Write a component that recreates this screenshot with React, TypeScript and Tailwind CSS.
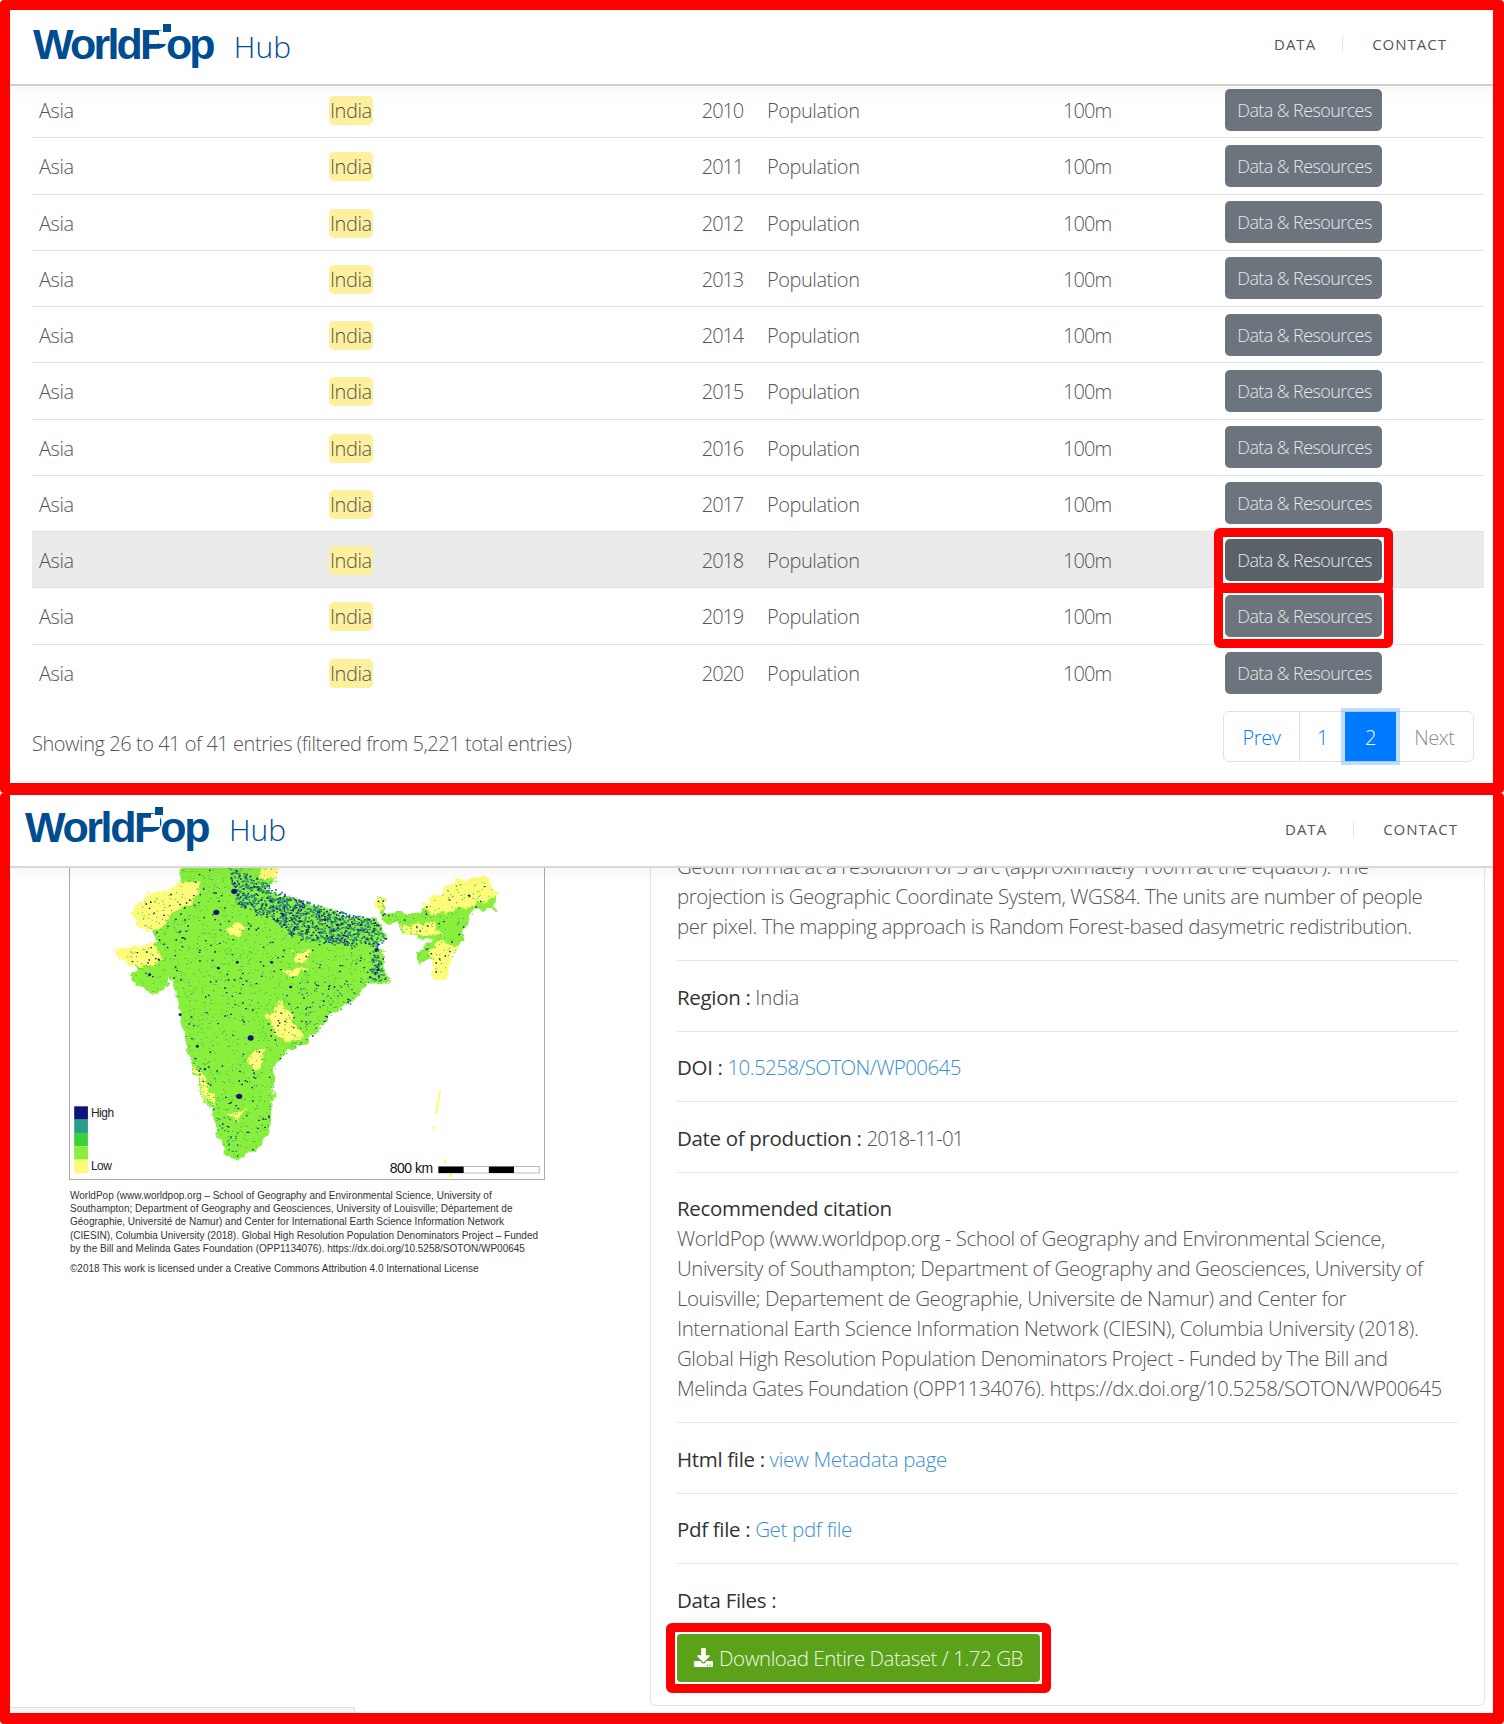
import { FaDownload } from 'react-icons/fa';

// seeded random so the map speckle stays the same between runs
function makeRandom(seed: number) {
  let s = seed;
  return () => {
    s = (s * 1664525 + 1013904223) % 4294967296;
    return s / 4294967296;
  };
}

type Pt = [number, number];

// map shapes are traced in crop coordinates, see the scale() on the group
const mainland: Pt[] = [[480,230],[740,230],[720,300],[700,335],[760,350],[800,375],[860,385],[900,410],[985,420],[1000,450],[1012,468],[985,490],[1000,510],[1018,605],[960,610],[945,630],[920,670],[870,700],[840,740],[800,790],[760,810],[720,850],[715,940],[703,1050],[680,1100],[650,1120],[620,1145],[590,1120],[560,1030],[530,940],[500,850],[470,720],[455,620],[445,590],[440,620],[400,645],[350,610],[335,590],[360,570],[340,540],[305,520],[400,495],[412,480],[390,445],[370,440],[350,400],[380,355],[430,345],[470,310]];
const northEast: Pt[] = [[985,355],[1010,355],[1010,400],[1100,400],[1130,360],[1200,310],[1260,300],[1300,345],[1295,390],[1240,390],[1200,500],[1160,590],[1140,590],[1130,530],[1100,553],[1090,520],[1130,480],[1050,460],[1040,430],[1020,430],[990,400]];
const yellowAreas: Pt[][] = [
  [[340,400],[380,345],[430,335],[470,310],[530,305],[510,370],[450,395],[420,450],[370,450]],
  [[295,515],[405,490],[425,545],[370,565],[330,550]],
  [[690,240],[750,240],[715,305],[680,290]],
  [[1100,380],[1200,300],[1270,290],[1310,345],[1240,375],[1170,400],[1130,410]],
  [[1045,435],[1140,428],[1155,470],[1060,462]],
  [[1150,480],[1200,500],[1165,600],[1135,600],[1125,530]],
  [[700,710],[735,665],[765,715],[795,770],[745,795],[710,745]],
  [[765,520],[815,512],[805,545],[770,545]],
  [[595,445],[640,428],[628,472],[598,470]],
  [[735,572],[815,562],[760,590]],
  [[650,830],[692,805],[682,865],[658,875]],
  [[505,850],[530,880],[565,985],[540,965]],
  [[595,1005],[645,985],[622,1025]],
  [[980,360],[1010,355],[1005,395],[985,395]],
];
const band: Pt[] = [[595,262],[655,285],[760,350],[860,385],[985,420],[1012,475],[985,500],[1010,600],[960,605],[975,500],[880,495],[760,470],[715,420],[615,375]];

function toPoints(pts: Pt[]) {
  return pts.map((p) => p.join(',')).join(' ');
}

function isInside(x: number, y: number, poly: Pt[]) {
  let inside = false;
  for (let i = 0, j = poly.length - 1; i < poly.length; j = i++) {
    const [xi, yi] = poly[i];
    const [xj, yj] = poly[j];
    if (yi > y !== yj > y && x < ((xj - xi) * (y - yi)) / (yj - yi) + xi) inside = !inside;
  }
  return inside;
}

function speckle(seed: number, count: number, keep: (x: number, y: number) => boolean, w = 4, h = 4) {
  const rand = makeRandom(seed);
  let d = '';
  for (let i = 0; i < count; i++) {
    const x = 300 + rand() * 1000;
    const y = 262 + rand() * 890;
    if (keep(x, y)) d += `M${x.toFixed(0)} ${y.toFixed(0)}h${w}v${h}h-${w}z`;
  }
  return d;
}

const anywhere = (x: number, y: number) => isInside(x, y, mainland) || isInside(x, y, northEast);
const inBand = (x: number, y: number) => isInside(x, y, band);
const onCoast = (x: number, y: number) =>
  (y > 1000 && x < 620 && x > 560 && isInside(x, y, mainland)) || (y > 600 && x > 780 && isInside(x, y, mainland));

const greenSpecks = speckle(11, 3000, anywhere, 3, 3);
const tealSpecks = speckle(23, 1300, anywhere, 3, 3);
const tealBand = speckle(37, 18000, inBand, 5, 5);
const navyBand = speckle(41, 6000, inBand, 4, 4);
const navySpecks = speckle(53, 700, anywhere, 4, 4);
const tealCoast = speckle(67, 2600, onCoast, 4, 4);
const cities: Pt[] = [[612,335],[565,398],[655,775],[625,950],[470,705],[515,800],[620,548],[990,570],[985,510],[850,420],[740,405],[390,585],[570,565],[710,548],[760,622]];
const legendColors = ['#10147a', '#2a9d8f', '#3ad23a', '#8aee3c', '#fdfb78'];

function IndiaMap() {
  return (
    <svg width="474" height="312" viewBox="0 0 476 312" preserveAspectRatio="none" className="block bg-white">
      <defs>
        <filter id="rough" filterUnits="userSpaceOnUse" x="181" y="200" width="1244" height="1000">
          <feTurbulence type="fractalNoise" baseFrequency="0.035" numOctaves="4" seed="4" />
          <feDisplacementMap in="SourceGraphic" scale="30" xChannelSelector="R" yChannelSelector="G" />
        </filter>
      </defs>
      <g transform="scale(0.3827 0.3333) translate(-181 -262)">
        {/* only the land and the low-density blotches get rough edges */}
        <g filter="url(#rough)">
          <polygon points={toPoints(mainland)} fill="#8aee3c" />
          <polygon points={toPoints(northEast)} fill="#8aee3c" />
          {yellowAreas.map((a, i) => (
            <polygon key={i} points={toPoints(a)} fill="#fdfb78" />
          ))}
        </g>
        <path d={greenSpecks} fill="#3ad23a" />
        <path d={tealSpecks} fill="#2a9d8f" />
        <path d={tealCoast} fill="#1f6f9a" />
        <path d={tealBand} fill="#2a8a78" />
        <path d={navyBand} fill="#10147a" />
        <path d={navySpecks} fill="#10147a" />
        {cities.map(([x, y], i) => (
          <ellipse key={i} cx={x} cy={y} rx={i < 4 ? 8 : 4} ry={i < 4 ? 8 : 4} fill="#10147a" />
        ))}
        <polygon points="1150,930 1155,932 1145,1000 1138,1005" fill="#fdfb78" />
        <rect x="1132" y="1038" width="6" height="10" fill="#fdfb78" />
        <rect x="1162" y="1140" width="6" height="12" fill="#fdfb78" />
        <rect x="1176" y="1176" width="8" height="18" fill="#fdfb78" />
        {legendColors.map((c, i) => (
          <rect key={c} x="192" y={980 + i * 40} width="36" height="40" fill={c} />
        ))}
        <rect x="1148" y="1161" width="264" height="19" fill="#fff" stroke="#999" strokeWidth="2" />
        <rect x="1148" y="1161" width="66" height="19" fill="#000" />
        <rect x="1280" y="1161" width="66" height="19" fill="#000" />
      </g>
      <text x="21" y="250" fontFamily="Liberation Sans, sans-serif" fontSize="12" fill="#222">High</text>
      <text x="21" y="303" fontFamily="Liberation Sans, sans-serif" fontSize="12" fill="#222">Low</text>
      <text x="321" y="306" fontFamily="Liberation Sans, sans-serif" fontSize="14" fill="#111">800 km</text>
    </svg>
  );
}

function Logo({ small }: { small?: boolean }) {
  return (
    <div className="-mt-[6px] flex items-baseline">
      <div
        className={
          small
            ? "relative font-['Liberation_Sans',sans-serif] text-[43px] font-bold leading-none tracking-[-2.4px] text-[#004c91]"
            : "relative font-['Liberation_Sans',sans-serif] text-[43px] font-bold leading-none tracking-[-2.8px] text-[#004c91]"
        }
      >
        WorldPop
        {/* the logo's P has a broken bowl with a square dot */}
        <span className="absolute left-[126px] top-[8px] h-[13px] w-[9px] bg-white" />
        <span className="absolute left-[130px] top-[1px] h-[8px] w-[8px] bg-[#004c91]" />
      </div>
      <span className="ml-[21px] -translate-y-[1px] text-[30px] font-light leading-none tracking-normal text-[#004c91]">Hub</span>
    </div>
  );
}

function Header({ small }: { small?: boolean }) {
  return (
    <header
      className={
        small
          ? 'relative z-10 flex h-[73px] shrink-0 items-center justify-between border-b-2 border-[#d9d9d9] bg-white pl-[15px] pr-[35px] shadow-[0_4px_14px_rgba(0,0,0,0.05)]'
          : 'relative z-10 flex h-[76px] shrink-0 items-center justify-between border-b-2 border-[#d0d0d0] bg-white pl-[23px] pr-[46px] shadow-[0_4px_14px_rgba(0,0,0,0.05)]'
      }
    >
      <Logo small={small} />
      <nav
        className={
          small
            ? 'mb-[4px] flex items-center text-[15px] font-normal tracking-[1px] text-[#555]'
            : 'mb-[6px] flex items-center text-[15px] font-normal tracking-[1px] text-[#555]'
        }
      >
        <span>DATA</span>
        <span className="ml-[26px] mr-[29px] h-[16px] w-px bg-[#dde4ec]" />
        <span>CONTACT</span>
      </nav>
    </header>
  );
}

const years = [2010, 2011, 2012, 2013, 2014, 2015, 2016, 2017, 2018, 2019, 2020];

function ResourceButton({ dark }: { dark?: boolean }) {
  return (
    <button
      className={
        dark
          ? 'block h-[42px] w-[157px] rounded-[5px] bg-[#5a6268] pl-[2px] text-[18px] tracking-[-0.6px] text-[#e6e9ec]'
          : 'block h-[42px] w-[157px] rounded-[5px] bg-[#6c757d] pl-[2px] text-[18px] tracking-[-0.6px] text-[#e6e9ec]'
      }
    >
      Data &amp; Resources
    </button>
  );
}

function DataRow({ year }: { year: number }) {
  const hovered = year === 2018;
  const marked = year === 2018 || year === 2019;
  const last = year === 2020;
  return (
    <div
      className={
        'grid h-[56.25px] grid-cols-[297px_361px_65px_308px_162px_1fr] items-center text-[#555] ' +
        (last ? '' : 'border-b border-[#dee2e6] ') +
        (hovered ? 'bg-[#ebebeb]' : '')
      }
    >
      <span className="pt-[3px] pl-[7px]">Asia</span>
      <span className="pt-[3px]">
        <mark className="rounded-[5px] bg-[#fff09e] px-[1px] py-[1px] text-[#555]">India</mark>
      </span>
      <span className="pt-[3px] text-center tracking-[-1.1px]">{year}</span>
      <span className="pt-[3px] pl-[12px]">Population</span>
      <span className="pt-[3px] tracking-[-0.9px]">100m</span>
      <span>
        {marked ? (
          <span className="relative -m-[11px] inline-block rounded-[6px] border-[9px] border-[#ff0000] bg-white p-[2px] align-top">
            <ResourceButton dark={hovered} />
          </span>
        ) : (
          <ResourceButton />
        )}
      </span>
    </div>
  );
}

function InfoBlock({ children, last }: { children: React.ReactNode; last?: boolean }) {
  return <div className={last ? 'pt-[20.5px]' : 'border-b border-[#e6e6e6] pt-[20.5px] pb-[19px]'}>{children}</div>;
}

const link = 'tracking-[-0.33px] text-[#3a8fd0]';
const label = 'font-normal tracking-[-0.33px] text-[#333]';

export default function App() {
  return (
    <div className="h-[1724px] w-[1504px] bg-white font-['Open_Sans',sans-serif] text-[20px] font-light leading-[30px] tracking-[-0.45px] text-[#555]">
      <section className="flex h-[793px] flex-col overflow-hidden rounded-[4px] border-t-[10px] border-r-[11px] border-b-[10px] border-l-[10px] border-[#ff0000]">
        <Header />
        <div className="ml-[22px] mr-[9px] -mt-[4px]">
          {years.map((y) => (
            <DataRow key={y} year={y} />
          ))}
        </div>
        <div className="mt-[10px] flex items-start justify-between pl-[22px] pr-[19px]">
          <span className="mt-[18px]">Showing 26 to 41 of 41 entries (filtered from 5,221 total entries)</span>
          <div className="flex h-[51px] rounded-[6px] border border-[#dee2e6] text-[#007bff]">
            <span className="flex w-[76px] items-center justify-center border-r border-[#dee2e6] pt-[3px]">Prev</span>
            <span className="flex w-[45px] items-center justify-center pt-[3px]">1</span>
            <span className="flex w-[51px] items-center justify-center bg-[#007bff] pt-[3px] text-white shadow-[0_0_0_4px_rgba(0,123,255,0.25)]">2</span>
            <span className="flex w-[77px] items-center justify-center pt-[3px] text-[#868e96]">Next</span>
          </div>
        </div>
      </section>

      <section className="flex h-[931px] flex-col overflow-hidden rounded-[4px] border-t-[2px] border-r-[11px] border-b-[11px] border-l-[10px] border-[#ff0000]">
        <Header small />
        <div className="flex flex-1">
          <div className="flex w-[640px] shrink-0 flex-col">
            <div className="ml-[59px] -mt-[2px] w-[476px] border border-[#aaa]">
              <IndiaMap />
            </div>
            <div className="mt-[9px] ml-[60px] font-['Liberation_Sans',sans-serif] text-[10px] font-normal leading-[13.2px] tracking-normal text-[#333]">
              <p>
                WorldPop (www.worldpop.org – School of Geography and Environmental Science, University of
                <br />
                Southampton; Department of Geography and Geosciences, University of Louisville; Département de
                <br />
                Géographie, Université de Namur) and Center for International Earth Science Information Network
                <br />
                (CIESIN), Columbia University (2018). Global High Resolution Population Denominators Project – Funded
                <br />
                by the Bill and Melinda Gates Foundation (OPP1134076). https://dx.doi.org/10.5258/SOTON/WP00645
              </p>
              <p className="mt-[7px]">©2018 This work is licensed under a Creative Commons Attribution 4.0 International License</p>
            </div>
            {/* bit of the page's horizontal scrollbar showing along the bottom */}
            <div className="mt-auto h-[6px] w-[345px] border-t border-r border-[#e0e0e0] bg-[#f5f5f5]" />
          </div>
          <div className="mb-[7px] -mt-[17px] w-[835px] rounded-b-[6px] border-x border-b border-[#e4e4e4] px-[26px] text-[20.5px] tracking-[-0.47px]">
            <div className="border-b border-[#e6e6e6] pb-[19px]">
              Geotiff format at a resolution of 3 arc (approximately 100m at the equator). The
              <br />
              projection is Geographic Coordinate System, WGS84. The units are number of people
              <br />
              per pixel. The mapping approach is Random Forest-based dasymetric redistribution.
            </div>
            <InfoBlock>
              <span className={label}>Region :</span> <span className="tracking-[-0.2px]">India</span>
            </InfoBlock>
            <InfoBlock>
              <span className={label}>DOI :</span>{' '}
              <span className="tracking-[-0.6px] text-[#3a8fd0]">10.5258/SOTON/WP00645</span>
            </InfoBlock>
            <InfoBlock>
              <span className={label}>Date of production :</span> <span className="tracking-[-1px]">2018-11-01</span>
            </InfoBlock>
            <InfoBlock>
              <div className={label}>Recommended citation</div>
              WorldPop (www.worldpop.org - School of Geography and Environmental Science,
              <br />
              University of Southampton; Department of Geography and Geosciences, University of
              <br />
              Louisville; Departement de Geographie, Universite de Namur) and Center for
              <br />
              International Earth Science Information Network (CIESIN), Columbia University (2018).
              <br />
              Global High Resolution Population Denominators Project - Funded by The Bill and
              <br />
              Melinda Gates Foundation (OPP1134076). https://dx.doi.org/10.5258/SOTON/WP00645
            </InfoBlock>
            <InfoBlock>
              <span className={label}>Html file :</span> <span className={link}>view Metadata page</span>
            </InfoBlock>
            <InfoBlock>
              <span className={label}>Pdf file :</span> <span className={link}>Get pdf file</span>
            </InfoBlock>
            <InfoBlock last>
              <div className={label}>Data Files :</div>
              <div className="relative -mx-[11px] mt-[8px] inline-block rounded-[6px] border-[9px] border-[#ff0000] bg-white p-[2px]">
                <button className="flex h-[48px] w-[363px] items-center justify-center gap-[6px] rounded-[4px] bg-[#5ba11a] text-[#f0f8e6]">
                  <FaDownload className="text-[19px] text-white" />
                  Download Entire Dataset / 1.72 GB
                </button>
              </div>
            </InfoBlock>
          </div>
        </div>
      </section>
    </div>
  );
}
